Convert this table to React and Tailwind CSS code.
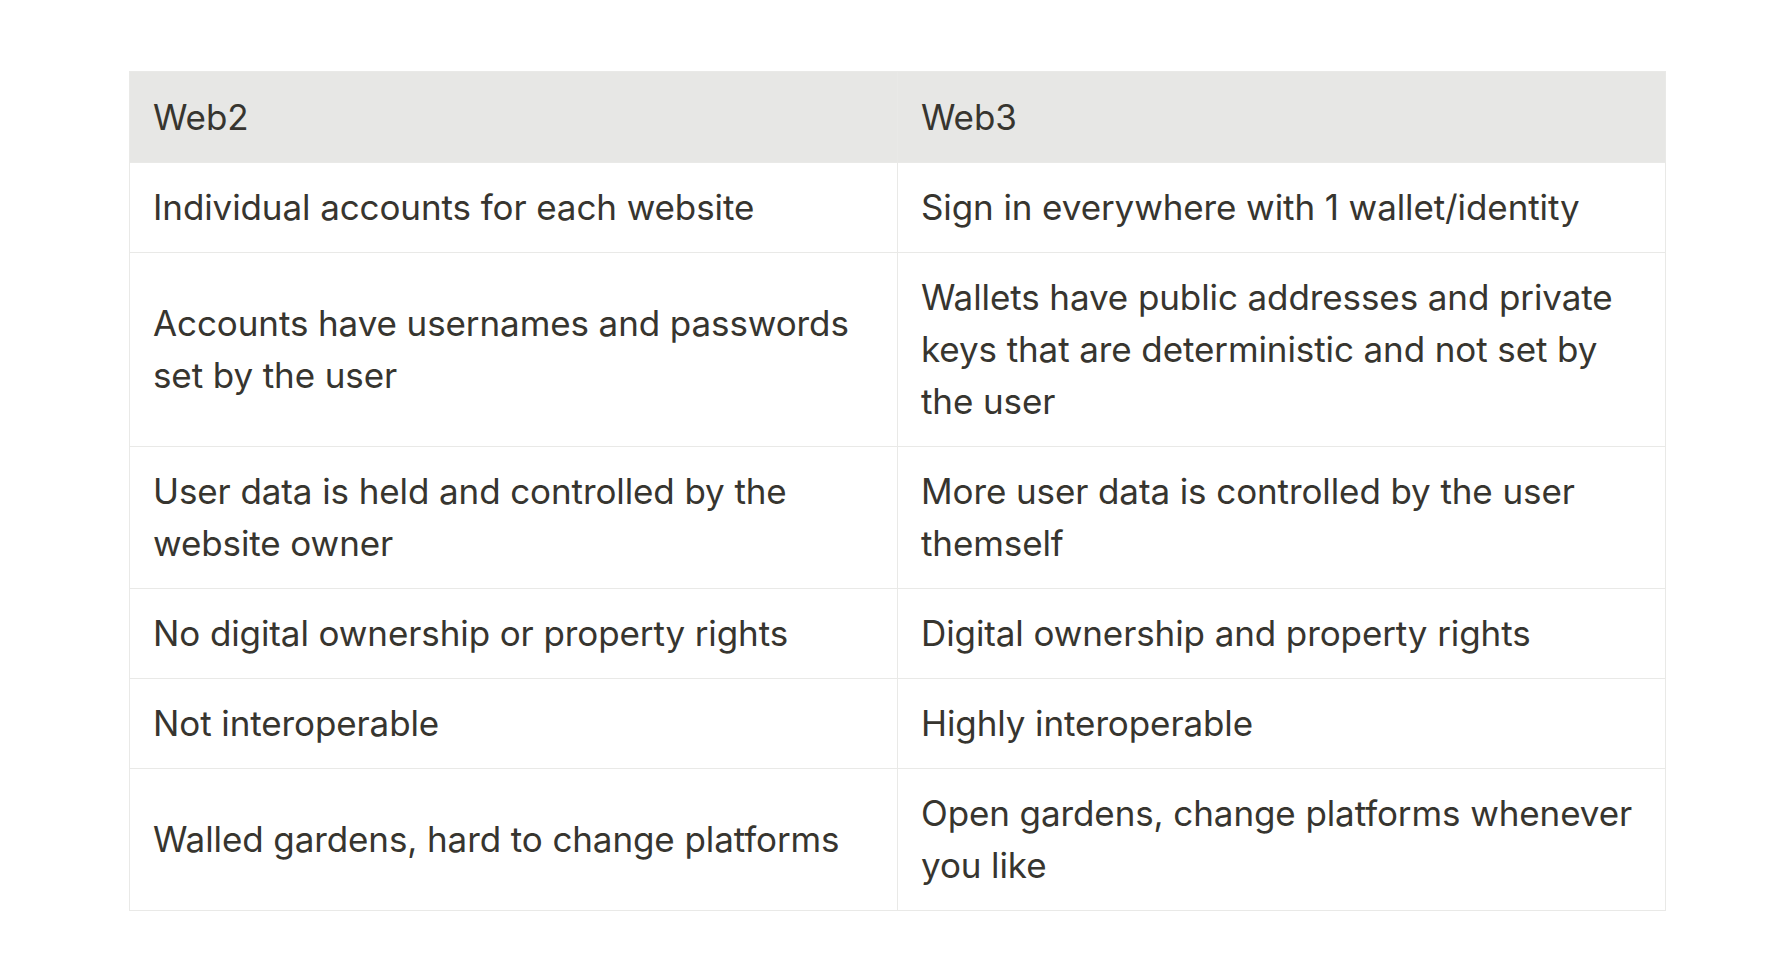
export default function App() {
  const rows = [
    ["Individual accounts for each website", "Sign in everywhere with 1 wallet/identity"],
    ["Accounts have usernames and passwords set by the user", "Wallets have public addresses and private keys that are deterministic and not set by the user"],
    ["User data is held and controlled by the website owner", "More user data is controlled by the user themself"],
    ["No digital ownership or property rights", "Digital ownership and property rights"],
    ["Not interoperable", "Highly interoperable"],
    ["Walled gardens, hard to change platforms", "Open gardens, change platforms whenever you like"],
  ];
  const cell = "border border-[#e9e9e7] px-[23px] pt-[18px] pb-[19px] align-middle text-left font-normal";
  return (
    <div className="min-h-screen bg-white pt-[71px] pl-[129px]" style={{ fontFamily: 'Inter, "Noto Sans", sans-serif' }}>
      <table className="table-fixed border-collapse w-[1537px] text-[35px] leading-[52px] text-[#37352f] tracking-[-0.1px]">
        <thead>
          <tr className="bg-[#e7e7e5]">
            <th className="border border-[#e9e9e7] px-[23px] py-[19px] align-middle text-left font-normal w-1/2">Web2</th>
            <th className="border border-[#e9e9e7] px-[23px] py-[19px] align-middle text-left font-normal w-1/2">Web3</th>
          </tr>
        </thead>
        <tbody>
          {rows.map((r, i) => (
            <tr key={i}>
              <td className={cell}>{r[0]}</td>
              <td className={cell}>{r[1]}</td>
            </tr>
          ))}
        </tbody>
      </table>
    </div>
  );
}
